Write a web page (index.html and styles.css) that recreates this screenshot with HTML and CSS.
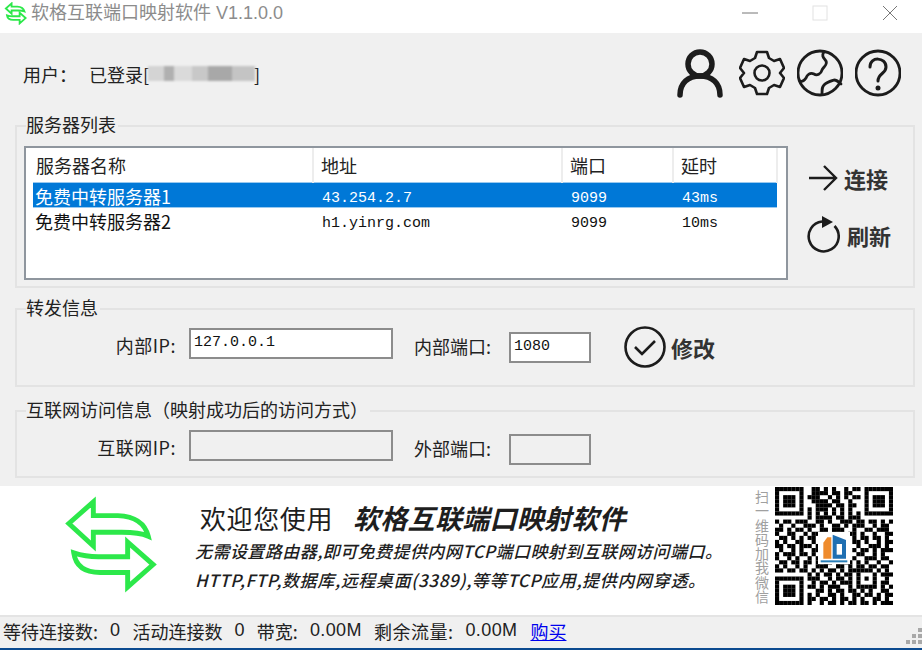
FILE: index.html
```html
<!DOCTYPE html>
<html>
	<head>
		<meta charset="utf-8">
		<title>软格互联端口映射软件</title>
		<link rel="stylesheet" href="styles.css">
	</head>
	<body>
		<div class="window">
			<!--标题栏-->
			<div class="titlebar">
				<svg class="title-icon" viewBox="0 0 100 100">
					<path d="M33 6 L8 28 L33 51 V37 H62 Q80 37 89 41 Q84 21 58 20 H33 Z"/>
					<path d="M68 47 L94 70 L68 93 V78 H40 C25 78 15 72 13 58 Q25 62 38 62 H68 Z"/>
				</svg>
				<span class="title-text">软格互联端口映射软件 V1.1.0.0</span>
				<div class="win-btns">
					<svg class="win-btn" viewBox="0 0 16 16"><path d="M0 8 H16" stroke="#777"/></svg>
					<svg class="win-btn" viewBox="0 0 16 16"><rect x="1" y="1" width="14" height="14" fill="none" stroke="#e2e2e2"/></svg>
					<svg class="win-btn" viewBox="0 0 16 16"><path d="M1 1 L15 15 M15 1 L1 15" stroke="#777"/></svg>
				</div>
			</div>

			<div class="content">
				<div class="user-row">
					<div class="user-label">用户：</div>
					<div class="user-state">已登录[<span class="user-name"></span>]</div>
					<div class="tools">
						<svg class="tool tool-user" viewBox="0 0 46 50">
							<circle cx="23" cy="16" r="12" stroke-width="5.5"/>
							<path d="M3 47 C3 35 11 28 23 28 C35 28 43 35 43 47" stroke-width="5.5"/>
						</svg>
						<svg class="tool" viewBox="0 0 46 50">
							<path d="M18 4 H28 L30 10 L35 13 L41 11 L45 20 L41 25 L45 30 L41 39 L35 37 L30 40 L28 46 H18 L16 40 L11 37 L5 39 L1 30 L5 25 L1 20 L5 11 L11 13 L16 10 Z" stroke-width="2.6" stroke-linejoin="round"/>
							<circle cx="23" cy="25" r="7.5" stroke-width="2.6"/>
						</svg>
						<svg class="tool" viewBox="0 0 46 50">
							<circle cx="23" cy="25" r="22" stroke-width="2.8"/>
							<path d="M27 4 C24 8 27 10 29 13 C31 17 26 19 25 22 C24 26 20 28 17 26 C13 24 10 27 9 30 C7 33 5 34 3 33" stroke-width="2.8"/>
							<path d="M25 46 C25 41 25 39 27 37 C30 34 34 33 37 32 C40 32 42 34 44 36" stroke-width="2.8"/>
						</svg>
						<svg class="tool" viewBox="0 0 46 50">
							<circle cx="23" cy="25" r="22" stroke-width="2.8"/>
							<path d="M15 19 C15 8 31 9 31 19 C31 26 23 25 23 33" stroke-width="3"/>
							<circle class="dot" cx="23" cy="40" r="2.5"/>
						</svg>
					</div>
				</div>

				<fieldset class="group group-list">
					<legend>服务器列表</legend>
					<div class="list-row">
						<div class="list-box">
							<table>
								<thead>
									<tr>
										<th class="col-name">服务器名称</th>
										<th class="col-addr">地址</th>
										<th class="col-port">端口</th>
										<th class="col-time">延时</th>
									</tr>
								</thead>
								<tbody>
									<tr class="current">
										<td class="name">免费中转服务器1</td>
										<td>43.254.2.7</td>
										<td>9099</td>
										<td>43ms</td>
									</tr>
									<tr>
										<td class="name">免费中转服务器2</td>
										<td>h1.yinrg.com</td>
										<td>9099</td>
										<td>10ms</td>
									</tr>
								</tbody>
							</table>
						</div>
						<div class="list-btns">
							<div class="btn btn-connect">
								<svg class="btn-icon" width="30" height="28" viewBox="0 0 30 28">
									<path d="M1 14 H28 M16 2 L28 14 L16 26" stroke-width="2.4"/>
								</svg>
								<span>连接</span>
							</div>
							<div class="btn btn-refresh">
								<svg class="btn-icon" width="34" height="37" viewBox="0 0 34 37">
									<path d="M16 5.5 A15 15 0 1 0 28.5 10" stroke-width="2.6"/>
									<path class="dot" d="M16 0 L27 6 L16 12 Z"/>
								</svg>
								<span>刷新</span>
							</div>
						</div>
					</div>
				</fieldset>

				<fieldset class="group group-forward">
					<legend>转发信息</legend>
					<div class="field-row">
						<label class="label-ip">内部IP:</label>
						<input class="input-ip" type="text" value="127.0.0.1">
						<label class="label-port">内部端口:</label>
						<input class="input-port" type="text" value="1080">
						<div class="btn btn-edit">
							<svg class="btn-icon" width="42" height="42" viewBox="0 0 42 42">
								<circle cx="21" cy="21" r="19.5" stroke-width="2.6"/>
								<path d="M11 21 L18 28 L31 15" stroke-width="2.6"/>
							</svg>
							<span>修改</span>
						</div>
					</div>
				</fieldset>

				<fieldset class="group group-net">
					<legend>互联网访问信息（映射成功后的访问方式）</legend>
					<div class="field-row">
						<label class="label-ip">互联网IP:</label>
						<input class="input-ip" type="text" disabled>
						<label class="label-port">外部端口:</label>
						<input class="input-port" type="text" disabled>
					</div>
				</fieldset>
			</div>

			<!--底部广告图-->
			<div class="banner">
				<svg class="banner-logo" viewBox="0 0 100 100">
					<path d="M33 6 L8 28 L33 51 V37 H62 Q80 37 89 41 Q84 21 58 20 H33 Z"/>
					<path d="M68 47 L94 70 L68 93 V78 H40 C25 78 15 72 13 58 Q25 62 38 62 H68 Z"/>
				</svg>
				<div class="banner-text">
					<div class="banner-head"><span class="welcome">欢迎您使用</span><b class="product">软格互联端口映射软件</b></div>
					<div class="banner-line">无需设置路由器,即可免费提供内网TCP端口映射到互联网访问端口。</div>
					<div class="banner-line banner-line-wide">HTTP,FTP,数据库,远程桌面(3389),等等TCP应用,提供内网穿透。</div>
				</div>
				<div class="qr-tip">扫一维码加我微信</div>
				<div class="qr">
					<svg id="qr" viewBox="0 0 29 29"></svg>
					<svg class="qr-logo" viewBox="0 0 24 24">
						<rect width="24" height="24" fill="#fff"/>
						<path d="M7 4 H10 V20 H4 V8 Z" fill="#ef8b2c"/>
						<path d="M11 2 L21 6 V20 H11 Z" fill="#1f6fb2"/>
						<path d="M14 9 H18 V17 H14 Z" fill="#fff"/>
						<path d="M2 22 H22" stroke="#2a7fb8" stroke-width="1.5"/>
					</svg>
				</div>
			</div>

			<div class="statusbar">
				<span class="stat">等待连接数:</span><span class="num">0</span>
				<span class="stat">活动连接数</span><span class="num">0</span>
				<span class="stat">带宽:</span><span class="num">0.00M</span>
				<span class="stat stat-flow">剩余流量:</span><span class="num">0.00M</span>
				<a href="#">购买</a>
				<svg class="grip" width="16" height="16" viewBox="0 0 16 16">
					<path d="M12 0 h4 v4 h-4 z M6 6 h4 v4 h-4 z M12 6 h4 v4 h-4 z M0 12 h4 v4 h-4 z M6 12 h4 v4 h-4 z M12 12 h4 v4 h-4 z" fill="#a8a8a8"/>
				</svg>
			</div>
			<div class="taskbar"></div>
		</div>

		<script src="qr.js"></script>
	</body>
</html>
```

FILE: styles.css
```css
* {
	margin: 0;
	padding: 0;
	box-sizing: border-box;
}

body {
	width: 922px;
	height: 650px;
	overflow: hidden;
	font-family: "Noto Sans CJK SC", "Liberation Sans", sans-serif;
	font-size: 18px;
	color: #222222;
	background-color: #FFFFFF;
}

.window {
	display: flex;
	flex-direction: column;
	height: 650px;
}

/* 标题栏 */
.titlebar {
	display: flex;
	align-items: center;
	height: 33px;
	padding: 0 24px 7px 4px;
	flex-shrink: 0;
}

.title-icon {
	width: 23px;
	height: 23px;
	margin-right: 4px;
	fill: #FFFFFF;
	stroke: #2CE84A;
	stroke-width: 8;
}

.title-text {
	font-family: "Liberation Sans", "Noto Sans CJK SC", sans-serif;
	line-height: 24px;
	color: #8C8C8C;
}

.win-btns {
	display: flex;
	gap: 54px;
	margin-left: auto;
}

.win-btn {
	display: block;
	width: 16px;
	height: 16px;
}

/* 内容区 */
.content {
	height: 453px;
	padding: 0 7px 0 15px;
	background-color: #F0F0F0;
	flex-shrink: 0;
}

.user-row {
	display: flex;
	align-items: center;
	height: 81px;
}

.user-label {
	width: 66px;
	margin-left: 8px;
	line-height: 24px;
}

.user-state {
	display: flex;
	align-items: center;
	line-height: 24px;
}

.user-name {
	display: block;
	width: 107px;
	height: 15px;
	margin: 0 -1px;
	background: linear-gradient(90deg, #D4D4D4 0 16px, #B0B0B0 16px 26px, #DADADA 26px 44px, #C8C8C8 44px 60px, #A8A8A8 60px 84px, #C4C4C4 84px 107px);
	filter: blur(1.2px);
}

.tools {
	display: flex;
	gap: 12px;
	margin-left: auto;
	margin-right: 14px;
	margin-top: -1px;
}

.tool {
	display: block;
	width: 46px;
	height: 50px;
	fill: none;
	stroke: #1C1C1C;
	stroke-linecap: round;
}

.tool .dot {
	fill: #1C1C1C;
	stroke: none;
}

.tool-user {
	margin-right: 4px;
}

/* 分组框 */
.group {
	border: 2px solid #E3E3E3;
	padding: 0;
	min-width: 0;
}

.group legend {
	margin-left: 9px;
	padding: 0 2px 4px 0;
	line-height: 20px;
}

.group-list {
	height: 174px;
}

.group-forward {
	height: 90px;
	margin-top: 9px;
}

.group-net {
	height: 79px;
	margin-top: 12px;
}

.list-row {
	display: flex;
	margin-top: 8px;
	padding-left: 7px;
}

.list-box {
	width: 764px;
	height: 134px;
	padding: 0 8px 0 7px;
	border: 2px solid #8F969E;
	background-color: #FFFFFF;
	flex-shrink: 0;
}

table {
	width: 745px;
	border-collapse: collapse;
	table-layout: fixed;
}

th {
	height: 34px;
	padding-left: 7px;
	border-right: 2px solid #EDEDED;
	font-weight: normal;
	text-align: left;
}

th.col-name {
	padding-left: 3px;
}

.col-name {
	width: 280px;
}

.col-addr {
	width: 249px;
}

.col-port {
	width: 111px;
}

td {
	height: 24px;
	padding-left: 9px;
	padding-top: 7px;
	font-family: "Liberation Mono", monospace;
	font-size: 15px;
	line-height: 17px;
	color: #111111;
	white-space: nowrap;
}

td.name {
	padding-left: 2px;
	padding-top: 2px;
	font-family: "Noto Sans CJK SC", sans-serif;
	font-size: 18px;
	line-height: 22px;
}

tr.current td {
	background-color: #0078D7;
	border-top: 1px solid #99C9EF;
	border-bottom: 1px solid #99C9EF;
	color: #FFFFFF;
}

/* 图标按钮 */
.btn {
	display: flex;
	align-items: center;
	font-size: 22px;
	font-weight: bold;
	line-height: 30px;
	color: #333333;
}

.btn-icon {
	display: block;
	fill: none;
	stroke: #1C1C1C;
	flex-shrink: 0;
}

.btn-icon .dot {
	fill: #1C1C1C;
	stroke: none;
}

.list-btns {
	display: flex;
	flex-direction: column;
	gap: 23px;
	padding-top: 17px;
	padding-left: 20px;
}

.btn-connect {
	gap: 6px;
}

.btn-refresh {
	gap: 7px;
	margin-left: -2px;
}

.btn-edit {
	gap: 5px;
	margin-left: 33px;
	margin-top: -2px;
}

.field-row {
	display: flex;
	align-items: flex-start;
	margin-top: 7px;
}

.field-row label {
	white-space: nowrap;
}

.label-ip {
	width: 159px;
	margin-right: 13px;
	line-height: 35px;
	letter-spacing: 0.5px;
	text-align: right;
}

.label-port {
	width: 78px;
	margin-left: 21px;
	margin-right: 17px;
	margin-top: 2px;
	line-height: 32px;
}

input {
	display: block;
	height: 31px;
	padding: 0 3px 3px;
	border: 2px solid #8C8C8C;
	border-radius: 0;
	outline: none;
	font-family: "Liberation Mono", monospace;
	font-size: 15px;
	color: #111111;
	background-color: #FFFFFF;
}

input:disabled {
	background-color: #F0F0F0;
}

.input-ip {
	width: 204px;
}

.input-port {
	width: 82px;
	margin-top: 4px;
}

/* 底部广告图 */
.banner {
	display: flex;
	height: 129px;
	padding-left: 61px;
	flex-shrink: 0;
}

.banner-logo {
	width: 98px;
	height: 98px;
	margin-top: 10px;
	fill: #FFFFFF;
	stroke: #2CE84A;
	stroke-width: 5;
	flex-shrink: 0;
}

.banner-text {
	width: 561px;
	margin-left: 36px;
	padding-top: 12px;
	color: #1E1E1E;
}

.banner-head {
	display: flex;
	align-items: center;
	height: 38px;
	padding-left: 5px;
}

.welcome {
	width: 153px;
	font-size: 26px;
	letter-spacing: 0.6px;
	white-space: nowrap;
}

.product {
	font-size: 27px;
	font-style: italic;
	letter-spacing: 0.3px;
	white-space: nowrap;
}

.banner-line {
	height: 29px;
	font-size: 17px;
	font-style: italic;
	font-weight: 500;
	letter-spacing: 0.45px;
	line-height: 29px;
	white-space: nowrap;
}

.banner-line-wide {
	letter-spacing: 0.66px;
}

.qr-tip {
	width: 14px;
	margin-left: -1px;
	padding-top: 3px;
	font-size: 14px;
	line-height: 14.3px;
	color: #A0A0A0;
	flex-shrink: 0;
}

.qr {
	position: relative;
	width: 118px;
	height: 118px;
	margin-left: 6px;
	margin-top: 1px;
	flex-shrink: 0;
	filter: blur(0.5px);
}

.qr svg {
	display: block;
	width: 118px;
	height: 118px;
}

.qr .qr-logo {
	position: absolute;
	top: 45px;
	left: 43px;
	width: 32px;
	height: 32px;
}

/* 状态栏 */
.statusbar {
	position: relative;
	display: flex;
	align-items: center;
	height: 33px;
	padding-left: 3px;
	padding-bottom: 4px;
	border-top: 2px solid #E4E4E4;
	background-color: #F0F0F0;
	flex-shrink: 0;
	white-space: nowrap;
}

.stat-flow {
	letter-spacing: 0.5px;
}

.statusbar a {
	margin-left: 1px;
	color: #0000EE;
	text-decoration: underline;
}

.num {
	margin-left: 12px;
	margin-right: 12px;
	font-family: "Liberation Sans", sans-serif;
	letter-spacing: 0.4px;
}

.grip {
	position: absolute;
	right: 0;
	bottom: 4px;
}

.taskbar {
	height: 2px;
	background-color: #0B4A8F;
	flex-shrink: 0;
}
```

FILE: qr.js
```js
var rows = [
	'#######..##.#.#..#.##.#######',
	'#.....#..####.##.##...#.....#',
	'#.###.#.###..#.#.#.##.#.###.#',
	'#.###.#..####.##..#...#.###.#',
	'#.###.#...####.##.##..#.###.#',
	'#.....#.#.###.#.#.#...#.....#',
	'#######.#.#.#.#.#.#.#.#######',
	'........#.####.##.###........',
	'#.##.###..##.#..###.##.##.#.#',
	'.#..#..###.#..##.#.###..#.##.',
	'##.#.##.#..##.###..#..##.###.',
	'#..##..#.###..#.#.##.#..#..##',
	'.##.#.#.##.#.......#.##.##.#.',
	'#.#..##..#.........##.#..#.##',
	'##.##.###.#.........#..###.#.',
	'.#..#.#..##........#.##.#.###',
	'#.###.##.#..........##..#.#..',
	'#..#.#..#.##.......#..###.##.',
	'.##.##.##.#.##.#.##.#.#..#..#',
	'#.#..#.#..###..##.#.##.##.##.',
	'##.##.##.#.#.##.#.######.#.#.',
	'........#.#.##.#.##.#...#.###',
	'#######.###..#.##.#.#.#.#..#.',
	'#.....#..#.##.#.###.#...#.##.',
	'#.###.#.##.#.###..#.#####.#.#',
	'#.###.#...##.#.##.##.#.#..##.',
	'#.###.#.#.#..##.#..##.##.#.##',
	'#.....#.##.##.#.##.#.#..##.#.',
	'#######.#..#.##.#.##.##.#.###'
];

var svg = document.getElementById('qr');
for (var y = 0; y < rows.length; y++) {
	for (var x = 0; x < rows[y].length; x++) {
		if (rows[y].charAt(x) == '#') {
			var rect = document.createElementNS('http://www.w3.org/2000/svg', 'rect');
			rect.setAttribute('x', x);
			rect.setAttribute('y', y);
			rect.setAttribute('width', 1.02);
			rect.setAttribute('height', 1.02);
			svg.appendChild(rect);
		}
	}
}
```
